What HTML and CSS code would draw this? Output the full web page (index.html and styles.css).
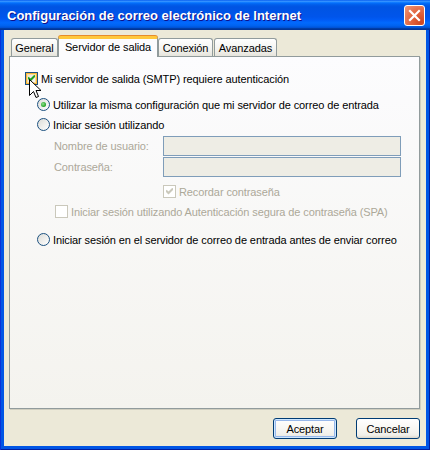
FILE: index.html
```html
<!DOCTYPE html>
<html lang="es">
<head>
<meta charset="utf-8">
<title>Configuración de correo electrónico de Internet</title>
<link rel="stylesheet" href="styles.css">
</head>
<body>
<div class="window">
  <div class="titlebar">
    <span class="title">Configuración de correo electrónico de Internet</span>
    <div class="close">
      <svg width="13" height="13" viewBox="0 0 13 13"><path d="M2 2 L11 11 M11 2 L2 11" stroke="#fff" stroke-width="2.2" stroke-linecap="square"/></svg>
    </div>
  </div>
  <div class="client">
    <div class="tabs">
      <div class="tab t-general">General</div>
      <div class="tab active t-serv">Servidor de salida</div>
      <div class="tab t-con">Conexión</div>
      <div class="tab t-av">Avanzadas</div>
    </div>
    <div class="panel">
      <div class="row chk-row">
        <span class="chk hover checked"><svg width="7" height="7" viewBox="0 0 7 7"><path d="M0 2.5 L2.5 5 L7 0.5" stroke="#21a121" stroke-width="2" fill="none"/></svg></span>
        <span class="lbl">Mi servidor de salida (SMTP) requiere autenticación</span>
      </div>
      <div class="row radio-row r1">
        <span class="radio on"></span>
        <span class="lbl">Utilizar la misma configuración que mi servidor de correo de entrada</span>
      </div>
      <div class="row radio-row r2">
        <span class="radio"></span>
        <span class="lbl">Iniciar sesión utilizando</span>
      </div>
      <div class="field-row f1">
        <span class="flabel">Nombre de usuario:</span>
        <span class="input"></span>
      </div>
      <div class="field-row f2">
        <span class="flabel">Contraseña:</span>
        <span class="input"></span>
      </div>
      <div class="row remember">
        <span class="chk disabled"><svg width="7" height="7" viewBox="0 0 7 7"><path d="M0 2.5 L2.5 5 L7 0.5" stroke="#cac8bb" stroke-width="2" fill="none"/></svg></span>
        <span class="lbl dis">Recordar contraseña</span>
      </div>
      <div class="row spa">
        <span class="chk disabled"></span>
        <span class="lbl dis">Iniciar sesión utilizando Autenticación segura de contraseña (SPA)</span>
      </div>
      <div class="row radio-row r3">
        <span class="radio"></span>
        <span class="lbl">Iniciar sesión en el servidor de correo de entrada antes de enviar correo</span>
      </div>
    </div>
    <div class="buttons">
      <div class="btn default">Aceptar</div>
      <div class="btn">Cancelar</div>
    </div>
  </div>
  <svg class="cursor" width="13" height="20" viewBox="0 0 13 20"><path d="M0.5 0.5 L0.5 16.5 L4.5 12.5 L7 18.5 L9.5 17.5 L7 11.5 L12 11.5 Z" fill="#fff" stroke="#000" stroke-width="1" stroke-linejoin="miter"/></svg>
</div>
</body>
</html>
```
FILE: styles.css
```css
* { box-sizing: border-box; }
html, body { margin: 0; padding: 0; }
body {
  width: 430px;
  height: 450px;
  overflow: hidden;
  font-family: "Liberation Sans", Arial, sans-serif;
  font-size: 11px;
  letter-spacing: -0.1px;
  color: #000;
}
.window {
  position: relative;
  width: 430px;
  height: 450px;
  background: #0055e5;
  box-shadow: inset 1px 0 #0831d9, inset -1px 0 #001ea0, inset 0 -1px #001ea0;
  display: flex;
  flex-direction: column;
}
.titlebar {
  height: 30px;
  flex: none;
  display: flex;
  align-items: center;
  padding-left: 7px;
  background: linear-gradient(to bottom, #0058ee 0%, #3a93ff 4%, #288eff 6%, #127dff 8%, #036ffc 10%, #0262ee 14%, #0057e5 20%, #0054e3 24%, #0055eb 56%, #005bf5 66%, #026afe 76%, #0062ef 86%, #0052d6 92%, #0040ab 94%, #003092 100%);
}
.title {
  color: #fff;
  font-weight: bold;
  font-size: 13px;
  text-shadow: 1px 1px #0f1089;
  flex: 1;
  letter-spacing: 0;
}
.close {
  width: 21px;
  height: 21px;
  margin-right: 5px;
  border: 1px solid #fff;
  border-radius: 3px;
  display: flex;
  align-items: center;
  justify-content: center;
  background: radial-gradient(circle at 85% 85%, #cc4622 0%, #dd5a34 30%, #e5704c 60%, #f09a7c 100%);
}
.close svg { display: block; }
.client {
  flex: 1;
  margin: 0 4px 4px 4px;
  background: #ece9d8;
  padding: 6px 6px 0 5px;
  display: flex;
  flex-direction: column;
}
.tabs {
  position: relative;
  z-index: 2;
  height: 21px;
  margin-bottom: -1px;
  display: flex;
  align-items: flex-end;
  padding-left: 2px;
}
.tab {
  height: 18px;
  margin-bottom: 1px;
  border: 1px solid #919b9c;
  border-bottom: none;
  border-radius: 3px 3px 0 0;
  background: linear-gradient(#ffffff, #f3f3ef 60%, #e6e4dc);
  display: flex;
  align-items: center;
  justify-content: center;
  padding-top: 1px;
}
.t-general { width: 47px; }
.t-serv { width: 100px; }
.t-con { width: 55px; }
.t-av { width: 63px; margin-left: 1px; }
.tab.active {
  height: 21px;
  margin-bottom: 0;
  background: #fcfcfe;
  border-top: 3px solid #ffc83c;
  box-shadow: 0 -1px #e68b2c;
  padding-top: 0;
  padding-bottom: 3px;
}
.panel {
  height: 353px;
  flex: none;
  border: 1px solid #919b9c;
  box-shadow: 1px 1px #d0cebf;
  background: linear-gradient(#fcfcfe, #f4f3ee);
  padding: 15px 0 0 15px;
  display: flex;
  flex-direction: column;
}
.row {
  display: flex;
  align-items: center;
  height: 13px;
  white-space: nowrap;
}
.lbl { margin-left: 3px; }
.dis { color: #aca899; }
.chk {
  width: 13px;
  height: 13px;
  flex: none;
  border: 1px solid #1c5180;
  background: linear-gradient(135deg, #dcdcd7, #ffffff);
  display: flex;
  align-items: center;
  justify-content: center;
}
.chk.hover {
  box-shadow: inset 0 0 0 1px #f8b636, inset 0 0 0 2px #fee09a;
}
.chk.disabled {
  border-color: #cac8bb;
  background: #ffffff;
}
.chk svg { display: block; }
.radio {
  width: 13px;
  height: 13px;
  flex: none;
  border-radius: 50%;
  border: 1px solid #1c5180;
  background: linear-gradient(135deg, #dcdcd7, #ffffff);
  display: flex;
  align-items: center;
  justify-content: center;
}
.radio.on::after {
  content: "";
  width: 5px;
  height: 5px;
  border-radius: 50%;
  background: radial-gradient(circle at 40% 40%, #8ee08e, #21a121 70%);
}
.r1 { margin-left: 12px; margin-top: 13px; }
.r2 { margin-left: 12px; margin-top: 7px; }
.field-row {
  display: flex;
  align-items: center;
  height: 20px;
  margin-left: 29px;
}
.f1 { margin-top: 5px; }
.f2 { margin-top: 1px; }
.flabel {
  width: 109px;
  color: #aca899;
}
.input {
  width: 238px;
  height: 20px;
  border: 1px solid #7f9db9;
  background: #eeede5;
}
.remember { margin-left: 138px; margin-top: 8px; }
.spa { margin-left: 30px; margin-top: 7px; }
.r3 { margin-left: 12px; margin-top: 15px; }
.buttons {
  display: flex;
  justify-content: flex-end;
  gap: 19px;
  margin-top: 9px;
}
.btn {
  width: 64px;
  height: 21px;
  border: 1px solid #003c74;
  border-radius: 3px;
  background: linear-gradient(#ffffff, #f8f7f3 50%, #f0efea 85%, #dcd7cc);
  display: flex;
  align-items: center;
  justify-content: center;
}
.btn.default {
  box-shadow: inset 0 0 0 1px #cee7ff, inset 0 0 0 2px #98b8ea;
}
.cursor {
  position: absolute;
  left: 29px;
  top: 79px;
  z-index: 5;
}
```
